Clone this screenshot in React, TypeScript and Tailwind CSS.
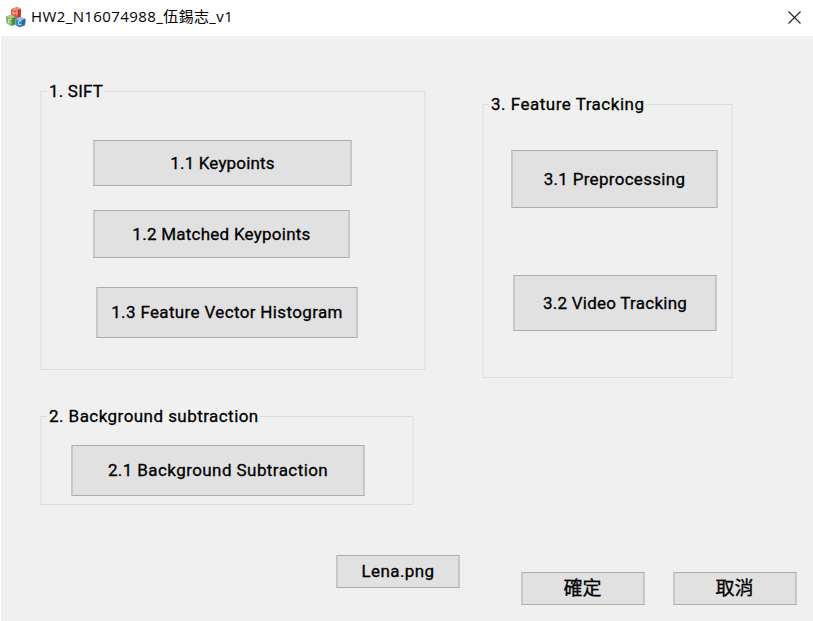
import type { ReactNode } from "react";

type ButtonProps = { label: string; box: string; text: string };

function PushButton({ label, box, text }: ButtonProps) {
  return (
    <button
      className={`flex shrink-0 items-center justify-center whitespace-nowrap border-x-2 border-y border-x-[#c8c8c8] border-y-[#adadad] bg-[#e1e1e1] text-black [-webkit-text-stroke:0.3px_black] ${box} ${text}`}
    >
      <span>{label}</span>
    </button>
  );
}

type GroupProps = { title: string; box: string; legend: string; children: ReactNode };

function GroupBox({ title, box, legend, children }: GroupProps) {
  return (
    <section className={`flex shrink-0 flex-col items-start border-x-2 border-y border-x-[#e6e6e6] border-y-[#dcdcdc] ${box}`}>
      <h2
        className={`-mt-[11px] ml-[5px] h-5 shrink-0 whitespace-nowrap bg-[#f0f0f0] pl-[2px] text-[17px] leading-5 text-black [-webkit-text-stroke:0.3px_black] ${legend}`}
      >
        {title}
      </h2>
      {children}
    </section>
  );
}

function AppIcon() {
  return (
    <svg width="20" height="21" viewBox="0 0 20 21" className="shrink-0">
      <path d="M5 2.200 11 0l4 2-.4 8-5 2.500L5 9z" fill="#dc5540" />
      <path d="m5 2.200 6-2.200 4 2-5.500 2z" fill="#ee8d7c" />
      <path d="m11.500 3.200 3.500-1.200-.4 8-3.500 2z" fill="#c63425" />
      <path d="m0 9.500 5-1.500 4.500 2-.2 7.500-4.300 1.500L.5 16z" fill="#78b052" />
      <path d="m0 9.500 5-1.500 4.500 2-5 1.800z" fill="#a5cf88" />
      <path d="m6 11.300 3.500-1.300-.2 7.500L6 18.800z" fill="#4c9038" />
      <path d="m9.500 11.500 5-1.500 5 2-.5 6-5.500 2.500-4-2.500z" fill="#3f86c4" />
      <path d="m9.500 11.500 5-1.500 5 2-6 2z" fill="#8fc3e9" />
      <path d="m16 13.100 3.500-1.100-.5 6-3.500 1.600z" fill="#28679f" />
      <path d="M7 8.500V4.500l2 2.500 2-2.500v4M5 12.500H2.500V16H5M2.500 14.200h2M15.500 14h-3v3.500h3" fill="none" stroke="#fff" strokeWidth="1" opacity=".6" />
    </svg>
  );
}

export default function App() {
  return (
    <div className="flex h-[621px] w-[813px] flex-col overflow-hidden bg-white font-['Roboto','Noto_Sans_CJK_TC',sans-serif]">
      <header className="flex h-9 shrink-0 items-center pb-[2px] pl-[6px] pr-[12px]">
        <AppIcon />
        <h1 className="-mt-[2px] ml-[5px] whitespace-nowrap font-['Open_Sans','Noto_Sans_CJK_TC',sans-serif] text-[15px] leading-5 tracking-[0.4px] text-black">
          HW2_N16074988_伍錫志_v1
        </h1>
        <button aria-label="Close" className="ml-auto">
          <svg width="13" height="13" viewBox="0 0 13 13" className="block">
            <path d="m.5.5 12 12m0-12-12 12" stroke="#222" strokeWidth="1.100" />
          </svg>
        </button>
      </header>
      <main className="ml-px flex flex-1 flex-col bg-[#f0f0f0]">
        <div className="flex h-[469px] shrink-0 items-start pl-[39px]">
          <div className="flex w-[442px] shrink-0 flex-col items-start pt-[55px]">
            <GroupBox title="1. SIFT" box="h-[279px] w-[386px]" legend="w-[57px] tracking-[0.2px]">
              <div className="flex flex-col items-start pl-[51px] pt-[39px]">
                <PushButton label="1.1 Keypoints" box="h-[46px] w-[259px]" text="pt-[2px] text-[17px] tracking-[0.15px]" />
                <PushButton label="1.2 Matched Keypoints" box="mt-6 h-12 w-[257px]" text="pt-[2px] text-[17px] tracking-[0.25px]" />
                <PushButton label="1.3 Feature Vector Histogram" box="ml-[3px] mt-[29px] h-[51px] w-[262px]" text="pt-px text-[17px] tracking-[0.35px]" />
              </div>
            </GroupBox>
            <div className="h-[46px] shrink-0" />
            <GroupBox title="2. Background subtraction" box="h-[89px] w-[374px]" legend="w-[213px] tracking-[0.45px]">
              <PushButton label="2.1 Background Subtraction" box="ml-[29px] mt-[19px] h-[51px] w-[294px]" text="pt-px text-[17px] tracking-[0.42px]" />
            </GroupBox>
          </div>
          <div className="pt-[68px]">
            <GroupBox title="3. Feature Tracking" box="h-[274px] w-[251px]" legend="w-[157px] tracking-[0.5px]">
              <div className="flex flex-col items-start pl-[27px] pt-[36px]">
                <PushButton label="3.1 Preprocessing" box="h-[58px] w-[207px]" text="pt-[2px] text-[17px] tracking-[0.3px]" />
                <PushButton label="3.2 Video Tracking" box="ml-[2px] mt-[67px] h-[56px] w-[204px]" text="pt-[2px] text-[17px] tracking-[0.25px]" />
              </div>
            </GroupBox>
          </div>
        </div>
        <footer className="flex items-start pl-[335px] pt-[50px]">
          <PushButton label="Lena.png" box="h-[33px] w-[124px]" text="pt-px text-[17px] tracking-[0.4px]" />
          <PushButton label="確定" box="ml-[61px] mt-[17px] h-[33px] w-[124px]" text="pr-px pt-px text-[19px] leading-5" />
          <PushButton label="取消" box="ml-[28px] mt-[17px] h-[33px] w-[124px]" text="pr-px pt-px text-[19px] leading-5" />
        </footer>
      </main>
    </div>
  );
}
